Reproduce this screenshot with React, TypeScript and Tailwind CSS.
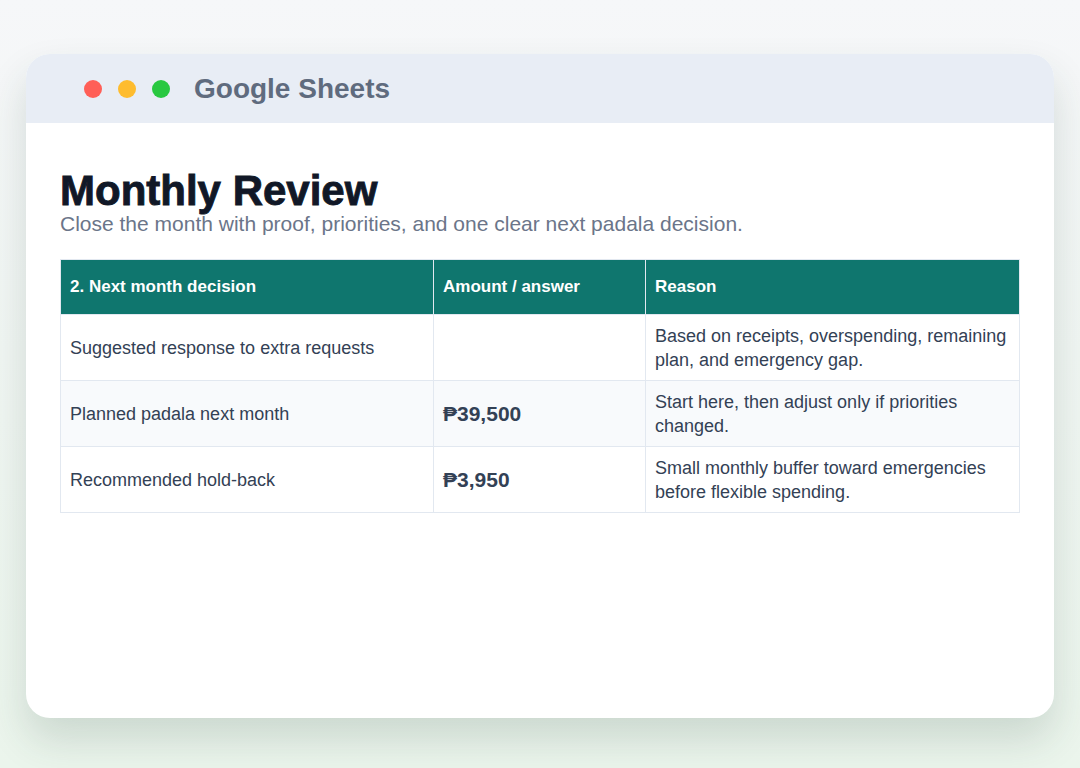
import React from "react";

const rows = [
  {
    label: "Suggested response to extra requests",
    amount: "",
    reason: "Based on receipts, overspending, remaining plan, and emergency gap.",
  },
  {
    label: "Planned padala next month",
    amount: "₱39,500",
    reason: "Start here, then adjust only if priorities changed.",
  },
  {
    label: "Recommended hold-back",
    amount: "₱3,950",
    reason: "Small monthly buffer toward emergencies before flexible spending.",
  },
];

export default function App() {
  return (
    <div className="min-h-[768px] w-full bg-gradient-to-b from-[#f6f7f9] to-[#ebf5ec] px-[26px] pt-[54px] pb-[50px] font-['Liberation_Sans',Arial,sans-serif]">
      <div className="flex h-[664px] flex-col overflow-hidden rounded-[24px] bg-white shadow-[0_22px_40px_rgba(40,70,55,0.16)]">
        {/* Title bar */}
        <div className="flex h-[69px] items-center bg-[#e8edf5] pl-[58px]">
          <div className="flex gap-[16px]">
            <span className="h-[18px] w-[18px] rounded-full bg-[#ff5f57]" />
            <span className="h-[18px] w-[18px] rounded-full bg-[#febc2e]" />
            <span className="h-[18px] w-[18px] rounded-full bg-[#28c840]" />
          </div>
          <span className="ml-[24px] text-[28px] font-bold text-[#5f6b7e]">Google Sheets</span>
        </div>

        {/* Body */}
        <div className="px-[34px] pt-[44px]">
          <h1 className="text-[42px] leading-[48px] font-black text-[#111827] [-webkit-text-stroke:0.9px_#111827]">
            Monthly Review
          </h1>
          <p className="mt-[-4px] text-[21px] leading-[26px] text-[#6b7589]">
            Close the month with proof, priorities, and one clear next padala decision.
          </p>

          <table className="mt-[22px] w-[960px] border-collapse text-left">
            <thead>
              <tr className="h-[55px] bg-[#0f766e] text-[17px] font-bold text-white">
                <th className="w-[373px] border border-[#e2e8f0] px-[9px]">2. Next month decision</th>
                <th className="w-[212px] border border-[#e2e8f0] px-[9px]">Amount / answer</th>
                <th className="border border-[#e2e8f0] px-[9px]">Reason</th>
              </tr>
            </thead>
            <tbody>
              {rows.map((r, i) => (
                <tr
                  key={i}
                  className={`h-[66px] text-[18px] leading-[24px] text-[#334155] ${i === 1 ? "bg-[#f8fafc]" : "bg-white"}`}
                >
                  <td className="border border-[#e2e8f0] px-[9px]">{r.label}</td>
                  <td className="border border-[#e2e8f0] px-[9px] text-[21px] font-bold text-[#334155]">
                    {r.amount}
                  </td>
                  <td className="border border-[#e2e8f0] px-[9px]">{r.reason}</td>
                </tr>
              ))}
            </tbody>
          </table>
        </div>
      </div>
    </div>
  );
}
